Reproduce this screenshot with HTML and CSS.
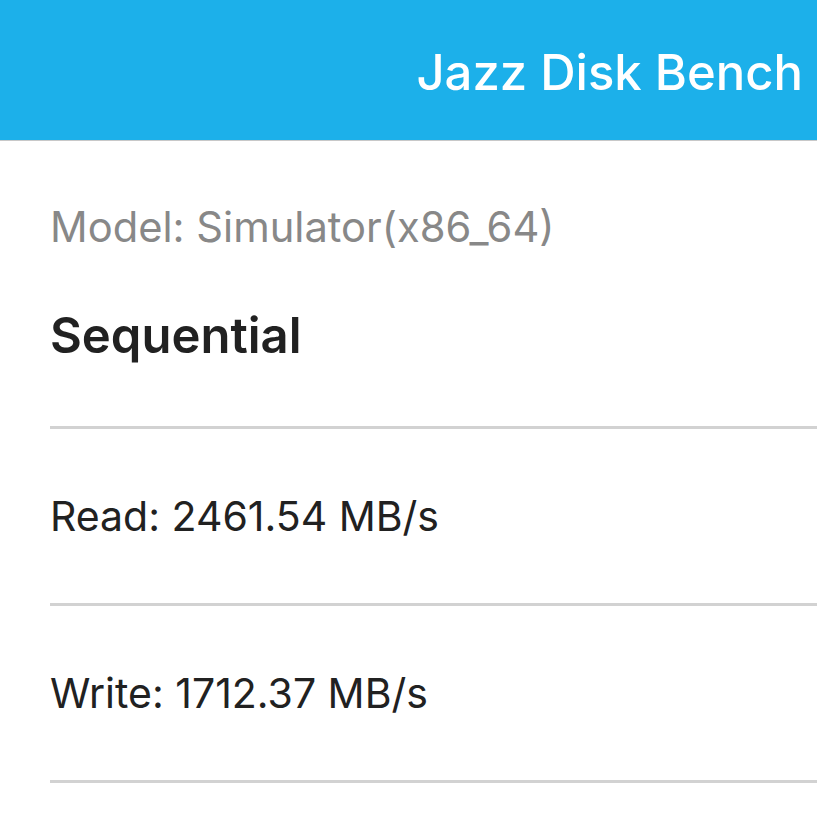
FILE: index.html
```html
<!DOCTYPE html>
<html>
 <head>
  <title>Jazz Disk Bench</title>
  <link rel="stylesheet" href="styles.css">
 </head>
 <body>
   <div class="navbar">
     <h1 class="navbar-title">Jazz Disk Bench</h1>
   </div>
   <div class="content">
     <p class="model">Model: Simulator(x86_64)</p>
     <h2 class="section-title">Sequential</h2>
     <ul class="results">
       <li class="result-row">Read: 2461.54 MB/s</li>
       <li class="result-row">Write: 1712.37 MB/s</li>
     </ul>
   </div>
 </body>
</html>
```

FILE: styles.css
```css
body
{
 margin: 0;
 background: #ffffff;
 font-family: Inter, "Noto Sans", sans-serif;
 color: #212121;
}
.navbar
{
 height: 140px;
 background-color: #1cb0ea;
 border-bottom: 1px solid #c8c8c8;
 display: flex;
 justify-content: flex-end;
 align-items: center;
 padding-right: 14px;
}
.navbar-title
{
 margin: 0;
 color: #ffffff;
 font-size: 49px;
 font-weight: 500;
 line-height: 60px;
 padding-top: 6px;
}
.content
{
 padding-left: 50px;
}
.model
{
 margin: 0;
 padding-top: 60px;
 font-size: 41.7px;
 line-height: 52px;
 color: #888888;
}
.section-title
{
 margin: 0;
 padding-top: 55px;
 font-size: 49px;
 font-weight: 600;
 line-height: 56px;
 height: 118px;
}
.results
{
 list-style: none;
 margin: 0;
 padding: 0;
 border-top: 3px solid #d2d2d2;
}
.result-row
{
 height: 174px;
 display: flex;
 align-items: center;
 font-size: 41px;
 border-bottom: 3px solid #d2d2d2;
}
```
